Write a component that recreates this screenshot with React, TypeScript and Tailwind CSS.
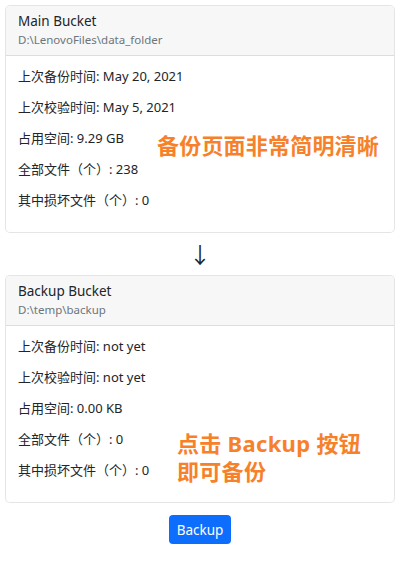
import React from 'react'

const font = { fontFamily: '"Noto Sans", "Noto Sans CJK SC", sans-serif' }

function Bucket({
  title,
  path,
  rows,
  note,
}: {
  title: string
  path: string
  rows: string[]
  note: React.ReactNode
}) {
  return (
    <div className="relative rounded-[5px] border border-black/10 bg-white overflow-hidden">
      <div className="bg-[#f7f7f7] border-b border-black/10 px-[12px] pt-[5px] h-[50px]">
        <div className="text-[13.5px] leading-[20px] text-[#212529]">{title}</div>
        <div className="text-[11.5px] leading-[17px] text-[#6c757d]">{path}</div>
      </div>
      <div className="px-[12px] pt-[10px] pb-[21px]">
        {rows.map((r) => (
          <div key={r} className="text-[13px] leading-[21px] text-[#212529] mb-[10px] last:mb-0">
            {r}
          </div>
        ))}
      </div>
      {note}
    </div>
  )
}

export default function App() {
  return (
    <div className="bg-white w-[400px] min-h-[567px] px-[5px] pt-[5px]" style={font}>
      <Bucket
        title="Main Bucket"
        path="D:\LenovoFiles\data_folder"
        rows={[
          '上次备份时间: May 20, 2021',
          '上次校验时间: May 5, 2021',
          '占用空间: 9.29 GB',
          '全部文件（个）: 238',
          '其中损坏文件（个）: 0',
        ]}
        note={
          <div className="absolute left-[151px] top-[125px] text-[22px] leading-[28px] font-bold text-[#f7812b] tracking-[0.2px]">
            备份页面非常简明清晰
          </div>
        }
      />
      <div className="flex justify-center h-[42px] items-center text-[22px] text-[#212529]">↓</div>
      <Bucket
        title="Backup Bucket"
        path="D:\temp\backup"
        rows={[
          '上次备份时间: not yet',
          '上次校验时间: not yet',
          '占用空间: 0.00 KB',
          '全部文件（个）: 0',
          '其中损坏文件（个）: 0',
        ]}
        note={
          <div className="absolute left-[171px] top-[153px] text-[22px] leading-[28px] font-bold text-[#f7812b] tracking-[0.3px]">
            点击 Backup 按钮
            <br />
            即可备份
          </div>
        }
      />
      <div className="flex justify-center pt-[12px]">
        <button
          type="button"
          className="bg-[#0d6efd] text-white text-[13.5px] leading-[20px] px-[8px] py-[4px] rounded-[4px] h-[29px]"
        >
          Backup
        </button>
      </div>
    </div>
  )
}
